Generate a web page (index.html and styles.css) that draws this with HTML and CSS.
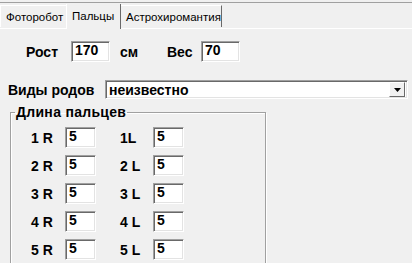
FILE: index.html
```html
<!DOCTYPE html>
<html lang="ru">
<head>
<meta charset="UTF-8">
<title>Пальцы</title>
<link rel="stylesheet" href="styles.css">
</head>
<body>
<div class="tabs">
    <div class="tab first">Фоторобот</div>
    <div class="tab active">Пальцы</div>
    <div class="tab last">Астрохиромантия</div>
</div>
<div class="panel">
    <div class="size-row">
        <span class="lbl growth">Рост</span>
        <span class="field wide">170</span>
        <span class="lbl unit">см</span>
        <span class="lbl weight">Вес</span>
        <span class="field wide">70</span>
    </div>
    <div class="kind-row">
        <span class="lbl kind">Виды родов</span>
        <div class="combo">
            <span class="combo-text">неизвестно</span>
            <span class="drop">
                <svg width="7" height="4" viewBox="0 0 7 4"><path d="M0 0h7L3.5 4z" fill="#000"/></svg>
            </span>
        </div>
    </div>
    <fieldset class="fingers">
        <legend>Длина пальцев</legend>
        <div class="finger-row"><span class="lbl fr">1 R</span><span class="field">5</span><span class="lbl fl">1L</span><span class="field">5</span></div>
        <div class="finger-row"><span class="lbl fr">2 R</span><span class="field">5</span><span class="lbl fl">2 L</span><span class="field">5</span></div>
        <div class="finger-row"><span class="lbl fr">3 R</span><span class="field">5</span><span class="lbl fl">3 L</span><span class="field">5</span></div>
        <div class="finger-row"><span class="lbl fr">4 R</span><span class="field">5</span><span class="lbl fl">4 L</span><span class="field">5</span></div>
        <div class="finger-row"><span class="lbl fr">5 R</span><span class="field">5</span><span class="lbl fl">5 L</span><span class="field">5</span></div>
    </fieldset>
</div>
</body>
</html>
```

FILE: styles.css
```css
body {
    margin: 0;
    height: 100vh;
    background-color: #f0f0f0;
    font-family: "Liberation Sans", Arial, sans-serif;
    color: #000;
    overflow: hidden;
}

.tabs {
    display: flex;
    align-items: flex-end;
    height: 25px;
    margin-top: 2px;
    border-top: 1px solid #a0a0a0;
    border-bottom: 1px solid #fff;
    font-size: 11.5px;
}

.tab {
    box-sizing: border-box;
    height: 22px;
    line-height: 22px;
    padding-left: 5px;
    border-top: 1px solid #fff;
    border-left: 1px solid #fff;
    border-right: 1px solid #a0a0a0;
    margin-bottom: 1px;
}

.tab.first {
    width: 66px;
    border-right: none;
}

.tab.active {
    width: 55px;
    height: 25px;
    line-height: 25px;
    margin-bottom: -1px;
    background-color: #f0f0f0;
    border-top: none;
    border-right: 1px solid #696969;
}

.tab.last {
    width: 101px;
    border-left: none;
    border-right: 1px solid #696969;
}

.panel {
    font-size: 14px;
    font-weight: bold;
}

.lbl {
    display: inline-block;
    white-space: nowrap;
}

.field {
    box-sizing: border-box;
    display: inline-block;
    width: 31px;
    height: 21px;
    line-height: 17px;
    padding-left: 3px;
    background-color: #fff;
    border: 1px solid;
    border-color: #a0a0a0 #fff #fff #a0a0a0;
    box-shadow: inset 1px 1px 0 #696969, inset -1px -1px 0 #e3e3e3;
}

.field.wide {
    width: 39px;
}

.size-row {
    display: flex;
    align-items: center;
    height: 21px;
    margin-top: 12px;
    padding-left: 26px;
}

.growth {
    width: 45px;
}

.unit {
    width: 47px;
    margin-left: 10px;
}

.weight {
    width: 34px;
}

.kind-row {
    display: flex;
    align-items: center;
    height: 19px;
    margin-top: 18px;
    padding-left: 8px;
}

.kind {
    width: 97px;
}

.combo {
    box-sizing: border-box;
    display: flex;
    align-items: center;
    width: 303px;
    height: 19px;
    background-color: #fff;
    border: 1px solid;
    border-color: #a0a0a0 #fff #fff #a0a0a0;
    box-shadow: inset 1px 1px 0 #696969, inset -1px -1px 0 #e3e3e3;
}

.combo-text {
    flex: 1;
    padding-left: 3px;
}

.drop {
    box-sizing: border-box;
    display: flex;
    align-items: center;
    justify-content: center;
    width: 16px;
    height: 15px;
    margin-right: 2px;
    background-color: #f0f0f0;
    border: 1px solid;
    border-color: #fff #696969 #696969 #fff;
}

.fingers {
    box-sizing: border-box;
    width: 256px;
    height: 170px;
    margin: 5px 0 0 10px;
    padding: 7px 0 0 0;
    border: 1px solid #a0a0a0;
    box-shadow: inset 1px 1px 0 #fff, 1px 1px 0 #fff;
}

.fingers legend {
    padding: 0 1px;
    margin-left: 4px;
    line-height: 16px;
    letter-spacing: 0.3px;
}

.finger-row {
    display: flex;
    align-items: center;
    height: 21px;
    margin-bottom: 7px;
    padding-left: 20px;
}

.fr {
    width: 34px;
}

.fl {
    width: 33px;
    margin-left: 24px;
}
```
